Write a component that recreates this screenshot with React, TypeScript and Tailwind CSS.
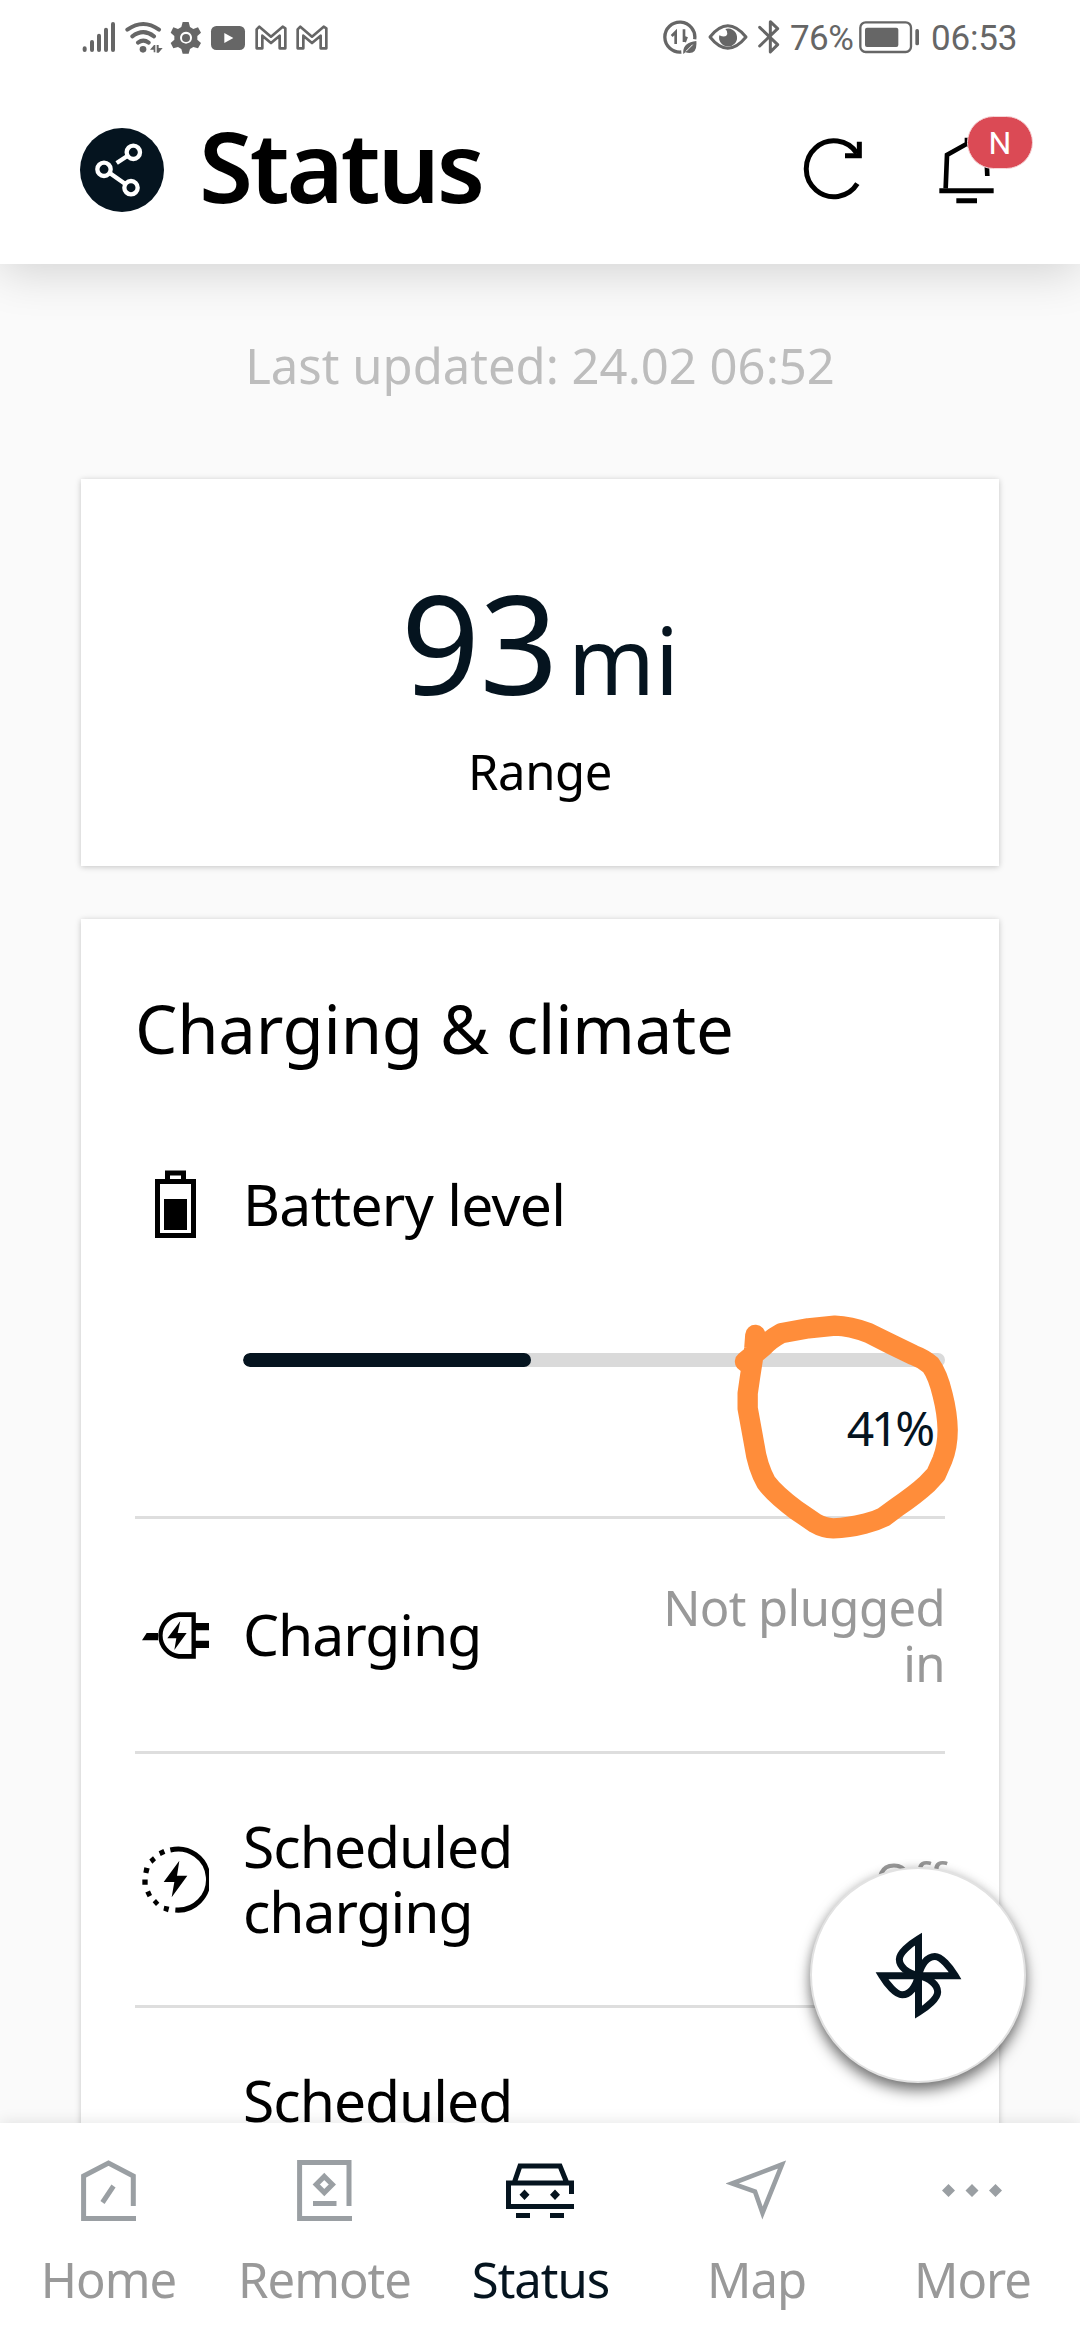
import type { ReactNode } from "react";

type IconProps = { box: string; className: string; children: ReactNode };

function Icon({ box, className, children }: IconProps) {
  return (
    <svg viewBox={box} preserveAspectRatio="none" fill="none" className={`shrink-0 ${className}`}>
      {children}
    </svg>
  );
}

const INK = "#05141f";
const GREY = "#666666";
const NAV_GREY = "#9a9fa3";

function StatusBar() {
  return (
    <div className="flex h-[76px] items-start pt-[20px] pl-[82px] pr-[65px] font-['Roboto',sans-serif] text-[#666666]">
      <Icon box="66 60 102 102" className="h-[34px] w-[34px]">
        <g stroke={GREY} strokeWidth="12" strokeLinecap="round">
          <path d="M74 145v5M96 126v24M117 107v43M138 89v61M159 72v78" />
        </g>
      </Icon>
      <Icon box="192 60 120 102" className="ml-[8px] h-[34px] w-[40px]">
        <g stroke={GREY} strokeWidth="12" strokeLinecap="round">
          <path d="M202 89Q250 55 297 89M217 109Q250 84 282 109M234 128Q250 116 266 128" />
        </g>
        <circle cx="249" cy="148" r="10" fill={GREY} />
        <path d="M270 149l12-14h4v22h-5v-8zM290 135h6v9h12l-12 14h-6z" fill={GREY} />
      </Icon>
      <Icon box="330 60 96 102" className="ml-[6px] h-[34px] w-[32px]">
        <path
          fillRule="evenodd"
          fill={GREY}
          d="M368 66h18l4 15 10 6 14-5 9 16-11 10v11l11 10-9 16-14-4-10 6-4 14h-18l-4-14-10-6-14 4-8-16 11-10v-11l-11-10 8-16 14 5 10-6zM378 95a18 18 0 1 0 .1 0z"
        />
        <circle cx="378" cy="114" r="12" fill={GREY} />
      </Icon>
      <Icon box="450 60 108 102" className="ml-[8px] h-[34px] w-[36px]">
        <rect x="453" y="78" width="102" height="72" rx="16" fill={GREY} />
        <path d="M493 99l27 15-27 15z" fill="white" />
      </Icon>
      {[0, 1].map((i) => (
        <Icon key={i} box="582 60 96 102" className="ml-[9px] h-[34px] w-[32px]">
          <path
            d="M587 88v57h17v-38l26 22 26-22v38h17V85l-8-5-35 30-35-30z"
            stroke={GREY}
            strokeWidth="8"
            strokeLinejoin="round"
          />
        </Icon>
      ))}
      <div className="ml-auto flex items-start">
        <Icon box="66 60 108 105" className="h-[35px] w-[36px]">
          <path d="M164 118A45 45 0 1 0 124 156" stroke={GREY} strokeWidth="10" />
          <path d="M95 108l12-12v36M132 88v38M140 110l-6 16" stroke={GREY} strokeWidth="8" />
          <path d="M130 162q-4-34 39-39q4 44-33 34z" fill={GREY} />
          <path d="M138 154l20-20" stroke="white" strokeWidth="3" />
        </Icon>
        <Icon box="201 60 120 105" className="ml-[10px] h-[35px] w-[40px]">
          <path d="M207 111Q260 44 315 111Q260 178 207 111z" stroke={GREY} strokeWidth="9" strokeLinejoin="round" />
          <path d="M253 87a27 27 0 1 1-18 19q20 9 24-4q2-8-6-15z" fill={GREY} />
        </Icon>
        <Icon box="351 57 66 108" className="ml-[10px] mt-[-1px] h-[36px] w-[22px]">
          <path
            d="M356 82l54 52-22 22V65l22 21-54 52"
            stroke={GREY}
            strokeWidth="9"
            strokeLinecap="round"
            strokeLinejoin="round"
          />
        </Icon>
        <span className="ml-[10px] mt-[1px] w-[64px] text-[35px] leading-[36px] tracking-[-0.6px]">76%</span>
        <Icon box="654 63 183 99" className="ml-[5px] mt-[1px] h-[33px] w-[61px]">
          <rect x="658" y="67" width="152" height="89" rx="16" stroke={GREY} strokeWidth="7" />
          <rect x="672" y="83" width="100" height="58" rx="6" fill={GREY} />
          <rect x="823" y="87" width="11" height="49" rx="5" fill={GREY} />
        </Icon>
        <span className="ml-[11px] mt-[1px] w-[84px] text-[35px] leading-[36px] tracking-[-0.2px]">06:53</span>
      </div>
    </div>
  );
}

function Header() {
  return (
    <header className="relative z-10 h-[264px] shrink-0 bg-white shadow-[0_8px_44px_rgba(0,0,0,0.16)]">
      <StatusBar />
      <div className="flex h-[188px] items-start pl-[80px] pr-[47px] pt-[41px]">
        <Icon box="60 84 252 252" className="mt-[11px] h-[84px] w-[84px]">
          <circle cx="186" cy="210" r="126" fill={INK} />
          <g stroke="white" strokeWidth="13">
            <circle cx="220" cy="157" r="20" />
            <circle cx="132" cy="208" r="20" />
            <circle cx="213" cy="263" r="20" />
            <path d="M202 168l-32 21M149 219l47 33" />
          </g>
        </Icon>
        <h1 className="ml-[35px] mt-[-2px] text-[98px] leading-[100px] font-semibold tracking-[-3.1px] text-black">
          Status
        </h1>
        <Icon box="123 141 180 192" className="ml-auto mt-[20px] h-[64px] w-[60px]">
          <path d="M286 281A83 84 0 1 1 285 190" stroke="black" strokeWidth="15" />
          <path d="M292 155v42h-43" stroke="black" strokeWidth="15" />
        </Icon>
        <div className="relative ml-[76px] mt-[19px] mr-[38px] h-[70px] w-[56px]">
          <Icon box="534 138 168 210" className="h-[70px] w-[56px]">
            <path d="M554 295l4-100 60-34v-18M679 258l-3-63-58-34" stroke="black" strokeWidth="14" />
            <path d="M535 302h163M586 332h62" stroke="black" strokeWidth="15" />
          </Icon>
          <span className="absolute left-[28px] top-[-20px] flex h-[53px] w-[66px] items-center justify-center rounded-full border border-[#f6d5d7] bg-[#db4a55] font-['Roboto',sans-serif] text-[32px] text-white">
            N
          </span>
        </div>
      </div>
    </header>
  );
}

function RangeCard() {
  return (
    <section className="mx-[81px] h-[387px] bg-white text-center shadow-[0_1px_6px_rgba(0,0,0,0.22)]">
      <div className="flex items-baseline justify-center pt-[68px] text-[#05141f]">
        <span className="text-[138px] leading-[188px] tracking-[-0.5px]">93</span>
        <span className="ml-[10px] text-[93px] leading-[100px]">mi</span>
      </div>
      <p className="mt-[4px] text-[49px] leading-[64px] tracking-[-0.4px] text-black">Range</p>
    </section>
  );
}

function PlugIcon() {
  return (
    <Icon box="66 138 201 127" className="h-[47px] w-[67px]">
      <path d="M221 145h-45a63 57 0 0 0 0 113h45z" stroke="black" strokeWidth="13" />
      <path d="M66 214l14-19h34v19zM222 168h45v19h-45zM222 216h45v19h-45z" fill="black" />
      <path d="M181 162l-39 47h27l-6 32 37-46h-27z" fill="black" />
    </Icon>
  );
}

function ScheduleIcon() {
  return (
    <Icon box="66 772 201 182" className="h-[67px] w-[67px]">
      <path d="M151 783A91 83 0 1 1 166 946" stroke="black" strokeWidth="14" />
      <g fill="black">
        <path d="M116 786l14-6 6 13-14 6zM88 809l11-9 9 11-11 9zM73 830l16 3-4 14-15-3zM67 863h16v14H67zM76 898l14-5 6 12-13 6zM98 925l10-9 10 10-10 9zM133 934l15 3-4 15-14-5z" />
        <path d="M178 812l-47 58h32l-8 41 47-58h-31z" />
      </g>
    </Icon>
  );
}

type RowProps = { icon?: ReactNode; label: string; value?: string; className: string };

function Row({ icon, label, value, className }: RowProps) {
  return (
    <div className={`flex items-center border-t-[3px] border-[#dedede] ${className}`}>
      <div className="flex w-[81px] justify-center shrink-0">{icon}</div>
      <p className="ml-[27px] w-[330px] pb-px text-[57px] leading-[65px] tracking-[-1px] text-black">{label}</p>
      <p className="ml-auto w-[300px] text-right text-[49px] leading-[56px] tracking-[-0.6px] text-[#999999]">
        {value}
      </p>
    </div>
  );
}

function CircleMark() {
  return (
    <svg
      viewBox="0 0 960 840"
      fill="none"
      className="pointer-events-none absolute left-[619px] top-[361px] h-[280px] w-[320px]"
    >
      <path
        d="M166 165L163 205L158 240Q150 290 143 340V385Q151 430 163 495Q172 560 199 608Q225 643 288 690L345 729Q370 744 400 745Q445 744 495 731Q525 724 551 711L590 682Q645 645 681 612L708 583L727 540Q743 500 743 450Q742 400 728 345Q714 285 692 255Q670 236 640 225L572 192L506 159Q450 138 405 137L325 145L243 160Q210 178 190 200L135 245"
        stroke="#ff8d3a"
        strokeWidth="61"
        strokeLinecap="round"
        strokeLinejoin="round"
      />
    </svg>
  );
}

function ChargingCard() {
  const level = 41;
  return (
    <section className="relative mx-[81px] mt-[53px] bg-white px-[54px] shadow-[0_1px_6px_rgba(0,0,0,0.22)]">
      <h2 className="h-[149px] pt-[69px] text-[67px] leading-[80px] tracking-[-0.2px] text-black">
        Charging &amp; climate
      </h2>
      <div className="mt-[96px] flex h-[80px] items-center">
        <div className="flex w-[81px] justify-center">
          <svg viewBox="0 0 41 68" className="h-[68px] w-[41px]" fill="none">
            <path d="M12.5 12V3H28.5V12" stroke="black" strokeWidth="5" />
            <rect x="2.5" y="11.5" width="36" height="54" stroke="black" strokeWidth="5" />
            <rect x="9" y="29" width="23" height="31" fill="black" />
          </svg>
        </div>
        <p className="ml-[27px] text-[57px] leading-[65px] tracking-[-0.7px] text-black">Battery level</p>
      </div>
      <div className="ml-[108px] mt-[109px] h-[14px] overflow-hidden rounded-full bg-[#dadada]">
        <div className="h-full rounded-full bg-[#05141f]" style={{ width: `${level}%` }} />
      </div>
      <p className="mr-[13px] mt-[32px] h-[117px] text-right text-[48px] leading-[57px] tracking-[-3.2px] text-[#05141f]">
        {level}%
      </p>
      <Row icon={<PlugIcon />} label="Charging" value="Not plugged in" className="h-[235px]" />
      <Row icon={<ScheduleIcon />} label="Scheduled charging" value="Off" className="h-[254px]" />
      <Row label="Scheduled climate" className="h-[254px]" />
      <CircleMark />
    </section>
  );
}

function FanButton() {
  return (
    <button className="absolute left-[810px] top-[1867px] z-10 flex h-[216px] w-[216px] items-center justify-center rounded-full border-2 border-[#e2e2e2] bg-white shadow-[0_8px_14px_rgba(0,0,0,0.5),0_0_10px_rgba(0,0,0,0.12)]">
      <Icon box="702 633 261 261" className="h-[87px] w-[87px]">
        <g stroke={INK} strokeWidth="21">
          {[0, 90, 180, 270].map((a) => (
            <path
              key={a}
              transform={`rotate(${a} 832.5 764)`}
              d="M832.5 764V654C806 670 775 696 775 715C775 738 799 756 832.5 764"
            />
          ))}
        </g>
      </Icon>
    </button>
  );
}

const tabs = [
  {
    label: "Home",
    icon: (
      <Icon box="0 0 55 61" className="h-[61px] w-[55px]">
        <path d="M52.3 46V16L27.5 3L2.6 16V58.5H55" stroke={NAV_GREY} strokeWidth="5" />
        <path d="M21.5 42.5L32.5 26" stroke={NAV_GREY} strokeWidth="5" />
      </Icon>
    ),
  },
  {
    label: "Remote",
    icon: (
      <Icon box="0 0 55 61" className="h-[61px] w-[55px]">
        <path d="M52 46V2.5H2.6V58.5H55M16 43.5H39.5" stroke={NAV_GREY} strokeWidth="5" />
        <path d="M27.3 16.5L35.3 24.5L27.3 32.5L19.3 24.5Z" stroke={NAV_GREY} strokeWidth="5.2" />
      </Icon>
    ),
  },
  {
    label: "Status",
    icon: (
      <Icon box="0 0 68 61" className="h-[61px] w-[68px]">
        <path
          d="M8.5 22L14 6H54L60.5 22M0 23H65.5V34M2.5 22V46.5H68M10 55.5H24M44 55.5H58"
          stroke={INK}
          strokeWidth="5"
        />
        <path d="M18.5 29.5l5 5.2-5 5.2-5-5.2zM49 29.5l5 5.2-5 5.2-5-5.2z" fill={INK} />
      </Icon>
    ),
  },
  {
    label: "Map",
    icon: (
      <Icon box="0 0 60 61" className="h-[61px] w-[60px]">
        <path d="M56 4.5L6 23.5L29 31.5L36.5 53Z" stroke={NAV_GREY} strokeWidth="4.6" />
      </Icon>
    ),
  },
  {
    label: "More",
    icon: (
      <Icon box="0 0 60 61" className="h-[61px] w-[60px]">
        <path
          d="M6.5 24l6.5 6.500-6.500 6.500L0 30.500zM30 24l6.500 6.500-6.500 6.500-6.500-6.500zM53.500 24l6.500 6.500-6.500 6.500-6.500-6.500z"
          fill={NAV_GREY}
        />
      </Icon>
    ),
  },
];

function TabBar() {
  return (
    <nav className="relative z-20 grid h-[217px] shrink-0 grid-cols-5 bg-white shadow-[0_-1px_14px_rgba(0,0,0,0.1)]">
      {tabs.map((tab) => (
        <div
          key={tab.label}
          className={`flex flex-col items-center pt-[37px] ${tab.label === "Status" ? "text-[#05141f]" : "text-[#999999]"}`}
        >
          {tab.icon}
          <span className="mt-[28px] pl-px text-[49px] leading-[60px] tracking-[-1px]">{tab.label}</span>
        </div>
      ))}
    </nav>
  );
}

export default function App() {
  return (
    <div className="relative flex h-[2340px] w-[1080px] flex-col overflow-hidden bg-[#fafafa] font-['Noto_Sans',sans-serif]">
      <Header />
      <main className="min-h-0 flex-1 overflow-hidden">
        <p className="h-[215px] pt-[69px] text-center text-[49px] leading-[64px] text-[#bdbdbd]">
          Last updated: 24.02 06:52
        </p>
        <RangeCard />
        <ChargingCard />
      </main>
      <FanButton />
      <TabBar />
    </div>
  );
}
